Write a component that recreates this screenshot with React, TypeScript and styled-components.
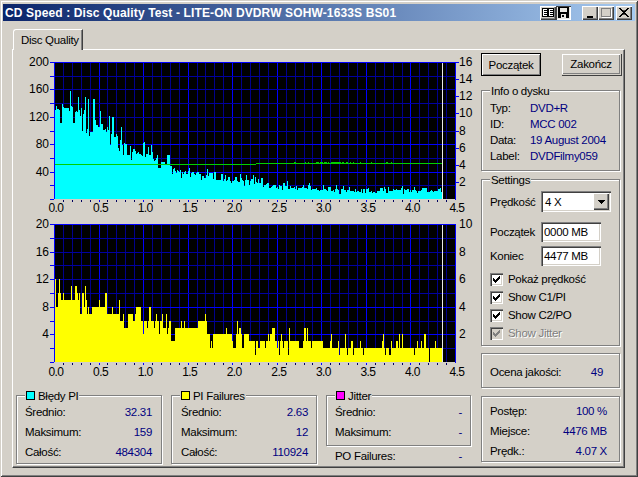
import React from 'react';
import styled, { createGlobalStyle } from 'styled-components';

const GlobalStyle = createGlobalStyle`
  html, body { margin: 0; padding: 0; background: #d4d0c8; }
  * { box-sizing: border-box; }
`;

const FACE = '#d4d0c8';
const NAVY = '#000080';

const Window = styled.div`
  width: 638px;
  height: 477px;
  padding: 4px 3px 3px 3px;
  background: ${FACE};
  color: #000;
  font-family: "Liberation Sans", Arial, sans-serif;
  font-size: 11.5px;
  letter-spacing: -0.3px;
  overflow: hidden;
  box-shadow: inset 1px 1px 0 ${FACE}, inset -1px -1px 0 #404040, inset 2px 2px 0 #fff, inset -2px -2px 0 #808080;
`;

const TitleBar = styled.div`
  height: 17px;
  display: flex;
  align-items: center;
  padding: 0 3px 0 2px;
  background: linear-gradient(90deg, #0a246a 0%, #a6caf0 100%);
  color: #fff;
  font-weight: bold;
  font-size: 12px;
  letter-spacing: 0.13px;
  white-space: nowrap;
`;

const TitleText = styled.span`
  flex: 1;
`;

const TitleButton = styled.div<{ $pressed?: boolean; $gap?: number }>`
  width: ${p => (p.$pressed ? 15 : 16)}px;
  height: 14px;
  margin-left: ${p => p.$gap ?? 0}px;
  display: flex;
  align-items: center;
  justify-content: center;
  background: ${p => (p.$pressed ? '#e9e7e2' : FACE)};
  box-shadow: ${p =>
    p.$pressed
      ? 'inset 1px 1px 0 #404040, inset -1px -1px 0 #fff'
      : 'inset 1px 1px 0 #fff, inset -1px -1px 0 #404040, inset -2px -2px 0 #808080'};
`;

const TabStrip = styled.div`
  margin: 8px 0 0 9px;
  height: 20px;
  padding-left: 1px;
  display: flex;
`;

const Tab = styled.div`
  position: relative;
  z-index: 1;
  width: 70px;
  height: 21px;
  padding: 4px 0 0 7px;
  background: ${FACE};
  border-top: 1px solid #fff;
  border-left: 1px solid #fff;
  border-right: 1px solid #404040;
  border-top-left-radius: 3px;
  box-shadow: inset -1px 0 0 #808080;
  white-space: nowrap;
`;

const Panel = styled.div`
  margin-left: 9px;
  width: 613px;
  height: 419px;
  padding: 3px 2px 0 3px;
  display: flex;
  gap: 5px;
  border-top: 1px solid #fff;
  border-left: 1px solid #fff;
  border-right: 1px solid #404040;
  border-bottom: 1px solid #404040;
  box-shadow: inset -1px -1px 0 #808080;
`;

const LeftColumn = styled.div`
  width: 460px;
  padding-top: 1px;
  display: flex;
  flex-direction: column;
`;

const ChartSvg = styled.svg`
  display: block;
  flex: none;
  shape-rendering: crispEdges;
  text {
    font-family: "Liberation Sans", Arial, sans-serif;
    font-size: 12px;
    letter-spacing: 0;
    fill: #000;
    shape-rendering: auto;
  }
  text.scale {
    letter-spacing: -0.6px;
  }
`;

const StatsRow = styled.div`
  margin-top: 15px;
  display: flex;
  gap: 9px;
`;

const Group = styled.div<{ $w?: number; $h: number; $pad: string; $top?: number }>`
  position: relative;
  flex: none;
  width: ${p => (p.$w ? `${p.$w}px` : '139px')};
  height: ${p => p.$h}px;
  margin-top: ${p => p.$top ?? 0}px;
  padding: ${p => p.$pad};
  border: 1px solid #808080;
  box-shadow: 1px 1px 0 #fff, inset 1px 1px 0 #fff;
`;

const Legend = styled.div`
  position: absolute;
  top: -8px;
  left: 8px;
  height: 15px;
  padding: 0 1px;
  display: flex;
  align-items: center;
  gap: 3px;
  background: ${FACE};
  white-space: nowrap;
`;

const Swatch = styled.span<{ $color: string }>`
  width: 9px;
  height: 9px;
  background: ${p => p.$color};
  border: 1px solid #000;
`;

const Row = styled.div<{ $h?: number }>`
  height: ${p => p.$h ?? 20}px;
  display: flex;
  align-items: center;
  justify-content: space-between;
  white-space: nowrap;
`;

const Value = styled.span`
  color: ${NAVY};
`;

const PoRow = styled(Row)`
  padding: 0 9px;
`;

const StackColumn = styled.div`
  flex: none;
  width: 145px;
`;

const RightColumn = styled.div`
  width: 140px;
  display: flex;
  flex-direction: column;
`;

const ButtonRow = styled.div`
  display: flex;
  justify-content: space-between;
  margin-bottom: 14px;
`;

const PushButton = styled.div<{ $default?: boolean }>`
  width: 60px;
  height: ${p => (p.$default ? 23 : 22)}px;
  display: flex;
  align-items: center;
  justify-content: center;
  background: ${FACE};
  border: 1px solid ${p => (p.$default ? '#000' : FACE)};
  box-shadow: ${p =>
    p.$default
      ? 'inset 1px 1px 0 #fff, inset -1px -1px 0 #808080'
      : 'inset 1px 1px 0 #fff, 1px 1px 0 #404040, inset -1px -1px 0 #808080'};
`;

const InfoRow = styled.div`
  height: 16px;
  display: flex;
  align-items: center;
  white-space: nowrap;
`;

const InfoLabel = styled.span`
  width: 40px;
`;

const FieldRow = styled.div<{ $top?: number; $h: number }>`
  height: ${p => p.$h}px;
  margin-top: ${p => p.$top ?? 0}px;
  display: flex;
  align-items: center;
`;

const FieldLabel = styled.span`
  width: 51px;
  flex: none;
`;

const Sunken = styled.div<{ $w: number }>`
  width: ${p => p.$w}px;
  height: 100%;
  padding-left: 3px;
  display: flex;
  align-items: center;
  background: #fff;
  box-shadow: inset 1px 1px 0 #808080, inset 2px 2px 0 #404040, inset -1px -1px 0 #fff, inset -2px -2px 0 ${FACE};
`;

const ComboText = styled.span`
  flex: 1;
  padding-left: 1px;
`;

const ComboArrow = styled.div`
  width: 16px;
  height: 17px;
  margin-right: 2px;
  display: flex;
  align-items: center;
  justify-content: center;
  background: ${FACE};
  box-shadow: inset 1px 1px 0 #fff, inset -1px -1px 0 #404040, inset -2px -2px 0 #808080;
`;

const CheckList = styled.div`
  margin-top: 4px;
`;

const CheckRow = styled.div<{ $disabled?: boolean }>`
  height: 18px;
  display: flex;
  align-items: center;
  gap: 5px;
  color: ${p => (p.$disabled ? '#808080' : '#000')};
  text-shadow: ${p => (p.$disabled ? '1px 1px 0 #fff' : 'none')};
`;

const CheckBox = styled.span<{ $disabled?: boolean }>`
  width: 13px;
  height: 13px;
  display: flex;
  align-items: center;
  justify-content: center;
  background: ${p => (p.$disabled ? FACE : '#fff')};
  box-shadow: inset 1px 1px 0 #808080, inset 2px 2px 0 #404040, inset -1px -1px 0 #fff, inset -2px -2px 0 ${FACE};
`;

// seeded so the traces come out the same on every load
function makeRandom(seed: number) {
  let a = seed;
  return () => {
    a = (a + 0x6d2b79f5) | 0;
    let t = Math.imul(a ^ (a >>> 15), 1 | a);
    t = (t + Math.imul(t ^ (t >>> 7), 61 | t)) ^ t;
    return ((t ^ (t >>> 14)) >>> 0) / 4294967296;
  };
}

function envelope(points: number[][], gb: number) {
  for (let i = 1; i < points.length; i++) {
    if (gb <= points[i][0]) {
      const [x0, y0] = points[i - 1];
      const [x1, y1] = points[i];
      return y0 + ((y1 - y0) * (gb - x0)) / (x1 - x0);
    }
  }
  return points[points.length - 1][1];
}

const DATA_COLS = 388;
const PX_PER_GB = 89.1;

const PI_ENVELOPE = [
  [0, 130], [0.1, 134], [0.2, 132], [0.3, 128], [0.4, 118], [0.5, 108], [0.6, 100], [0.7, 90],
  [0.8, 80], [0.9, 71], [1.0, 64], [1.1, 59], [1.2, 53], [1.3, 46], [1.4, 41], [1.5, 38],
  [1.6, 37], [1.7, 34], [1.8, 30], [1.9, 28], [2.0, 26], [2.2, 25], [2.5, 19], [3.0, 14],
  [3.5, 11], [4.0, 13], [4.35, 12],
];

const FAIL_ENVELOPE = [
  [0, 8.6], [0.3, 8.8], [0.5, 7.8], [0.8, 6.8], [1.0, 6], [1.5, 4.8], [2.0, 4.1], [2.2, 3.4],
  [2.8, 3], [3.0, 2.5], [3.5, 2.2], [4.0, 2.5], [4.35, 2],
];

function piData() {
  const rnd = makeRandom(1633);
  const out: number[] = [];
  for (let c = 0; c < DATA_COLS; c++) {
    const base = envelope(PI_ENVELOPE, c / PX_PER_GB);
    if (c > 0 && rnd() < 0.25) {
      out.push(out[c - 1]);
      continue;
    }
    let v = base * (0.95 + rnd() * 0.1) + (rnd() - 0.5) * 4;
    const roll = rnd();
    if (roll < 0.2) v = base * (1.08 + rnd() * 0.2) + rnd() * 5;
    else if (roll < 0.32) v = base * (0.78 + rnd() * 0.12) - rnd() * 3;
    out.push(Math.max(3, v));
  }
  out[0] = 159;
  return out;
}

function failureData() {
  const rnd = makeRandom(59);
  const out: number[] = [];
  for (let c = 0; c < DATA_COLS; c++) {
    const base = envelope(FAIL_ENVELOPE, c / PX_PER_GB);
    if (c > 0 && rnd() < 0.25) {
      out.push(out[c - 1]);
      continue;
    }
    let v = Math.round(base);
    const roll = rnd();
    if (roll < 0.2) v += 1 + Math.floor(rnd() * 2);
    else if (roll < 0.36) v -= 1 + Math.floor(rnd() * 2);
    out.push(Math.max(1, Math.floor(base * 0.55), v));
  }
  out[1] = 12;
  out[5] = 12;
  out[31] = 11;
  out[375] = 0;
  return out;
}

type ChartProps = {
  height: number;
  plotH: number;
  maxValue: number;
  leftStep: number;
  leftTick: number;
  rightMax: number;
  rightStep: number;
  rightTicks: boolean;
  brightRows: number[];
  rowStep: number;
  fill: string;
  data: number[];
  labelY: number;
  showSpeed?: boolean;
};

const PLOT_X = 38;
const PLOT_W = 401;
const PLOT_TOP = 8;
const END_COL = PLOT_X + DATA_COLS;
const SPEED_GREEN = '#00d000';

const Chart: React.FC<ChartProps> = ({
  height, plotH, maxValue, leftStep, leftTick, rightMax, rightStep, rightTicks,
  brightRows, rowStep, fill, data, labelY, showSpeed,
}) => {
  const bottom = PLOT_TOP + plotH;
  const yOf = (value: number) => Math.round(bottom - (value / maxValue) * plotH);

  const columns: React.ReactNode[] = [];
  for (let i = 1; i < 45; i++) {
    const x = Math.round(PLOT_X + (i * PLOT_W) / 45) + 0.5;
    const major = i % 5 === 0;
    columns.push(
      <line key={`c${i}`} x1={x} x2={x} y1={PLOT_TOP} y2={bottom} stroke={major ? '#0000ff' : '#00008c'} />,
    );
    columns.push(
      <line key={`b${i}`} x1={x} x2={x} y1={bottom + 1} y2={bottom + 3} stroke={major ? '#0000ff' : '#000060'} />,
    );
  }

  const rows: React.ReactNode[] = [];
  const ticks: React.ReactNode[] = [];
  for (let v = rowStep; v <= maxValue; v += rowStep) {
    const y = yOf(v) + 0.5;
    const bright = brightRows.includes(v) || v === maxValue;
    rows.push(<line key={`r${v}`} x1={PLOT_X} x2={PLOT_X + PLOT_W} y1={y} y2={y} stroke={bright ? '#0000ff' : '#0000a0'} />);
  }
  for (let v = 0; v <= maxValue; v += leftTick) {
    const y = yOf(v) + 0.5;
    ticks.push(<line key={`t${v}`} x1={PLOT_X - 4} x2={PLOT_X} y1={y} y2={y} stroke="#0000ff" />);
  }

  const leftLabels: React.ReactNode[] = [];
  for (let v = leftStep; v <= maxValue; v += leftStep) {
    leftLabels.push(
      <text key={v} x={PLOT_X - 5} y={yOf(v) + 4} textAnchor="end">{v}</text>,
    );
  }

  const rightLabels: React.ReactNode[] = [];
  for (let v = rightStep; v <= rightMax; v += rightStep) {
    const y = yOf((v / rightMax) * maxValue);
    rightLabels.push(
      <text key={v} x={PLOT_X + PLOT_W + 4} y={y + 4}>{v}</text>,
    );
    if (rightTicks) {
      ticks.push(
        <line key={`rt${v}`} x1={PLOT_X + PLOT_W} x2={PLOT_X + PLOT_W + 4} y1={y + 0.5} y2={y + 0.5} stroke="#0000ff" />,
      );
    }
  }

  const trace = data
    .map((v, c) => `M${PLOT_X + c + 0.5} ${bottom}V${Math.min(bottom, yOf(v))}`)
    .join('');

  const bumps: React.ReactNode[] = [];
  if (showSpeed) {
    const rnd = makeRandom(7);
    for (let c = 240; c < 340; c++) {
      if (rnd() < (c > 265 && c < 290 ? 0.8 : 0.2)) {
        bumps.push(<rect key={c} x={PLOT_X + c} y={PLOT_TOP + 100} width={1} height={1} fill={SPEED_GREEN} />);
      }
    }
  }

  return (
    <ChartSvg width={460} height={height} viewBox={`0 0 460 ${height}`}>
      <rect x={PLOT_X} y={PLOT_TOP} width={PLOT_W} height={plotH} fill="#000" />
      {columns}
      {rows}
      <path d={trace} stroke={fill} strokeWidth={1} fill="none" />
      <line x1={END_COL + 0.5} x2={END_COL + 0.5} y1={PLOT_TOP} y2={bottom} stroke="#e8e8e8" />
      {showSpeed && (
        <>
          <line x1={PLOT_X} x2={240} y1={PLOT_TOP + 102.5} y2={PLOT_TOP + 102.5} stroke={SPEED_GREEN} />
          <line x1={240} x2={END_COL} y1={PLOT_TOP + 101.5} y2={PLOT_TOP + 101.5} stroke={SPEED_GREEN} />
          {bumps}
        </>
      )}
      <line x1={PLOT_X + 0.5} x2={PLOT_X + 0.5} y1={PLOT_TOP} y2={bottom} stroke="#0000ff" />
      <line x1={PLOT_X + PLOT_W + 0.5} x2={PLOT_X + PLOT_W + 0.5} y1={PLOT_TOP} y2={bottom + 1} stroke="#0000ff" />
      <line x1={PLOT_X} x2={PLOT_X + PLOT_W} y1={PLOT_TOP + 0.5} y2={PLOT_TOP + 0.5} stroke="#0000ff" />
      {ticks}
      {leftLabels}
      {rightLabels}
      {Array.from({ length: 10 }, (_, i) => (
        <text key={i} className="scale" x={PLOT_X + 2 + (i * PLOT_W) / 9} y={labelY} textAnchor="middle">
          {(i * 0.5).toFixed(1)}
        </text>
      ))}
    </ChartSvg>
  );
};

const BookIcon = () => (
  <svg width="12" height="11" viewBox="0 0 12 11" shapeRendering="crispEdges">
    <path d="M0.5 1.5H5.5V9.5H0.5ZM6.5 1.5H11.5V9.5H6.5Z" fill="#fff" stroke="#000" />
    <path d="M2 3.5H4.5M2 5.5H4.5M2 7.5H4.5M8 3.5H10.5M8 5.5H10.5M8 7.5H10.5" stroke="#000" />
  </svg>
);

const FloppyIcon = () => (
  <svg width="11" height="11" viewBox="0 0 11 11" shapeRendering="crispEdges">
    <path d="M0 0H11V11H0Z" fill="#000" />
    <path d="M2 1H9V5H2Z" fill="#e9e7e2" />
    <path d="M3 7H8V11H3Z" fill="#e9e7e2" />
    <path d="M4 8H6V10H4Z" fill="#000" />
  </svg>
);

const MinimizeIcon = () => (
  <svg width="10" height="10" viewBox="0 0 10 10" shapeRendering="crispEdges">
    <path d="M2 8H8V10H2Z" fill="#000" />
  </svg>
);

const MaximizeIcon = () => (
  <svg width="11" height="11" viewBox="0 0 11 11" shapeRendering="crispEdges">
    <path d="M0.5 1.5H9.5V9.5H0.5Z" fill="none" stroke="#808080" />
    <path d="M0 1H10V2H0Z" fill="#808080" />
    <path d="M1 10H11V11H1ZM10 2H11V10H10Z" fill="#fff" />
  </svg>
);

const CloseIcon = () => (
  <svg width="10" height="9" viewBox="0 0 10 9" shapeRendering="crispEdges">
    <path d="M1 0L5 3.4L9 0H10L5.8 4.5L10 9H9L5 5.6L1 9H0L4.2 4.5L0 0Z" fill="#000" stroke="#000" strokeWidth="0.6" />
  </svg>
);

const DownArrow = () => (
  <svg width="7" height="4" viewBox="0 0 7 4" shapeRendering="crispEdges">
    <path d="M0 0H7V1H6V2H5V3H4V4H3V3H2V2H1V1H0Z" fill="#000" />
  </svg>
);

const CheckMark: React.FC<{ color: string }> = ({ color }) => (
  <svg width="7" height="7" viewBox="0 0 7 7" shapeRendering="crispEdges">
    <path d="M6 0H7V3H6V4H5V5H4V6H3V7H2V6H1V5H0V2H1V3H2V4H3V3H4V2H5V1H6Z" fill={color} />
  </svg>
);

const piValues = piData();
const failureValues = failureData();

const App: React.FC = () => (
  <>
    <GlobalStyle />
    <Window>
      <TitleBar>
        <TitleText>CD Speed : Disc Quality Test - LITE-ON DVDRW SOHW-1633S BS01</TitleText>
        <TitleButton><BookIcon /></TitleButton>
        <TitleButton $pressed><FloppyIcon /></TitleButton>
        <TitleButton $gap={11}><MinimizeIcon /></TitleButton>
        <TitleButton><MaximizeIcon /></TitleButton>
        <TitleButton $gap={2}><CloseIcon /></TitleButton>
      </TitleBar>

      <TabStrip>
        <Tab>Disc Quality</Tab>
      </TabStrip>

      <Panel>
        <LeftColumn>
          <Chart
            height={162}
            plotH={137}
            maxValue={200}
            leftStep={40}
            leftTick={20}
            rightMax={16}
            rightStep={2}
            rightTicks
            brightRows={[40, 80]}
            rowStep={20}
            fill="#00ffff"
            data={piValues}
            labelY={158}
            showSpeed
          />
          <Chart
            height={164}
            plotH={138}
            maxValue={20}
            leftStep={4}
            leftTick={2}
            rightMax={10}
            rightStep={2}
            rightTicks={false}
            brightRows={[4, 8]}
            rowStep={2}
            fill="#ffff00"
            data={failureValues}
            labelY={160}
          />
          <StatsRow>
            <Group $w={146} $h={69} $pad="6px 9px 0 8px">
              <Legend><Swatch $color="#00ffff" />Błędy PI</Legend>
              <Row><span>Średnio:</span><Value>32.31</Value></Row>
              <Row><span>Maksimum:</span><Value>159</Value></Row>
              <Row><span>Całość:</span><Value>484304</Value></Row>
            </Group>
            <Group $w={146} $h={69} $pad="6px 8px 0 9px">
              <Legend><Swatch $color="#ffff00" />PI Failures</Legend>
              <Row><span>Średnio:</span><Value>2.63</Value></Row>
              <Row><span>Maksimum:</span><Value>12</Value></Row>
              <Row><span>Całość:</span><Value>110924</Value></Row>
            </Group>
            <StackColumn>
              <Group $w={145} $h={51} $pad="6px 8px 0 8px">
                <Legend><Swatch $color="#ff00ff" />Jitter</Legend>
                <Row><span>Średnio:</span><Value>-</Value></Row>
                <Row><span>Maksimum:</span><Value>-</Value></Row>
              </Group>
              <PoRow><span>PO Failures:</span><Value>-</Value></PoRow>
            </StackColumn>
          </StatsRow>
        </LeftColumn>

        <RightColumn>
          <ButtonRow>
            <PushButton $default>Początek</PushButton>
            <PushButton>Zakończ</PushButton>
          </ButtonRow>

          <Group $h={81} $pad="9px 8px 0 8px">
            <Legend>Info o dysku</Legend>
            <InfoRow><InfoLabel>Typ:</InfoLabel><Value>DVD+R</Value></InfoRow>
            <InfoRow><InfoLabel>ID:</InfoLabel><Value>MCC 002</Value></InfoRow>
            <InfoRow><InfoLabel>Data:</InfoLabel><Value>19 August 2004</Value></InfoRow>
            <InfoRow><InfoLabel>Label:</InfoLabel><Value>DVDFilmy059</Value></InfoRow>
          </Group>

          <Group $h={167} $top={8} $pad="11px 8px 0 8px">
            <Legend>Settings</Legend>
            <FieldRow $h={21}>
              <FieldLabel>Prędkość</FieldLabel>
              <Sunken $w={70}>
                <ComboText>4 X</ComboText>
                <ComboArrow><DownArrow /></ComboArrow>
              </Sunken>
            </FieldRow>
            <FieldRow $h={20} $top={10}>
              <FieldLabel>Początek</FieldLabel>
              <Sunken $w={60}>0000 MB</Sunken>
            </FieldRow>
            <FieldRow $h={20} $top={4}>
              <FieldLabel>Koniec</FieldLabel>
              <Sunken $w={60}>4477 MB</Sunken>
            </FieldRow>
            <CheckList>
              <CheckRow><CheckBox><CheckMark color="#000" /></CheckBox>Pokaż prędkość</CheckRow>
              <CheckRow><CheckBox><CheckMark color="#000" /></CheckBox>Show C1/PI</CheckRow>
              <CheckRow><CheckBox><CheckMark color="#000" /></CheckBox>Show C2/PO</CheckRow>
              <CheckRow $disabled><CheckBox $disabled><CheckMark color="#808080" /></CheckBox>Show Jitter</CheckRow>
            </CheckList>
          </Group>

          <Group $h={35} $top={7} $pad="3px 16px 0 8px">
            <Row $h={30}><span>Ocena jakości:</span><Value>49</Value></Row>
          </Group>

          <Group $h={66} $top={8} $pad="4px 12px 0 8px">
            <Row><span>Postęp:</span><Value>100 %</Value></Row>
            <Row><span>Miejsce:</span><Value>4476 MB</Value></Row>
            <Row><span>Prędk.:</span><Value>4.07 X</Value></Row>
          </Group>
        </RightColumn>
      </Panel>
    </Window>
  </>
);

export default App;
